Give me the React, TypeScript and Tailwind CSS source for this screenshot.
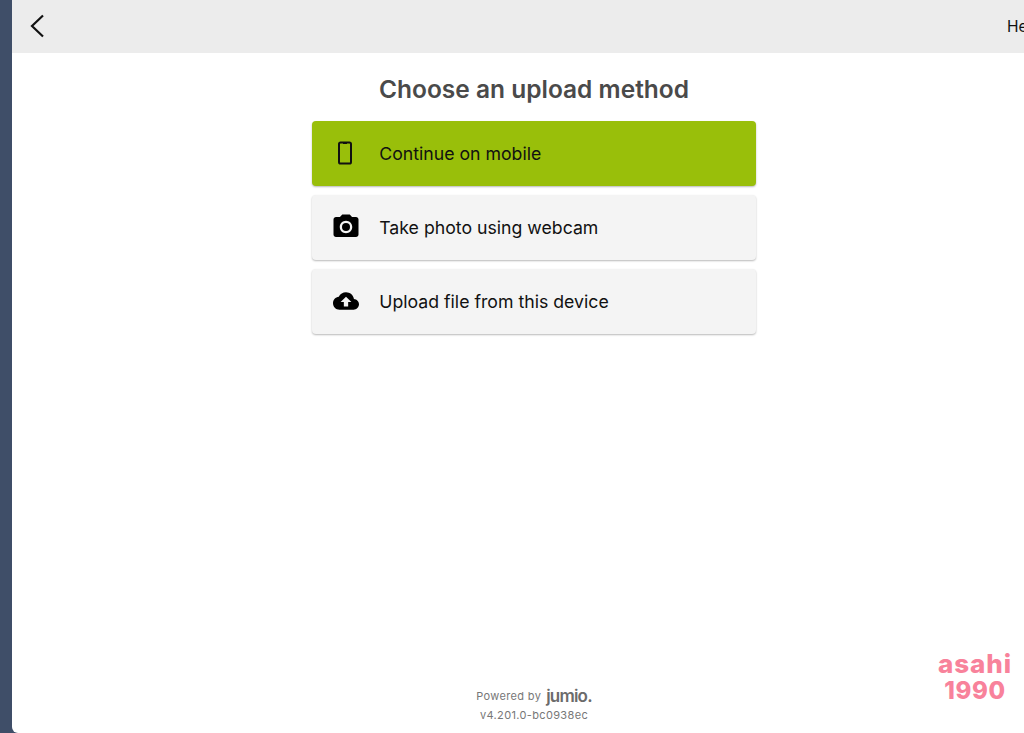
import React from "react";

function Phone() {
  return (
    <svg width="16" height="24" viewBox="0 0 16 24" fill="none" className="-ml-[1px] text-[#111]">
      <rect x="2" y="1.5" width="12" height="21" rx="1.6" stroke="currentColor" strokeWidth="2" />
      <path d="M6 2h4" stroke="currentColor" strokeWidth="2" />
    </svg>
  );
}

function Camera() {
  return (
    <svg width="30" height="30" viewBox="0 0 24 24" fill="#000">
      <circle cx="12" cy="12" r="3.2" />
      <path d="M9 2L7.17 4H4c-1.1 0-2 .9-2 2v12c0 1.1.9 2 2 2h16c1.1 0 2-.9 2-2V6c0-1.1-.9-2-2-2h-3.17L15 2H9zm3 15c-2.76 0-5-2.24-5-5s2.24-5 5-5 5 2.24 5 5-2.24 5-5 5z" />
    </svg>
  );
}

function Cloud() {
  return (
    <svg width="26" height="26" viewBox="0 0 24 24" fill="#000">
      <path d="M19.35 10.04C18.67 6.59 15.64 4 12 4 9.11 4 6.6 5.64 5.35 8.04 2.34 8.36 0 10.91 0 14c0 3.31 2.69 6 6 6h13c2.76 0 5-2.24 5-5 0-2.64-2.05-4.78-4.65-4.96zM14 13v4h-4v-4H7l5-5 5 5h-3z" />
    </svg>
  );
}

function Option({ icon, label, active }: { icon: React.ReactNode; label: string; active?: boolean }) {
  return (
    <div
      className={`flex h-[64.5px] items-center rounded-[4px] shadow-[0_1px_2px_rgba(0,0,0,0.28)] ${
        active ? "bg-[#99bf0a]" : "bg-[#f4f4f4]"
      }`}
    >
      <div className="flex w-[67px] shrink-0 justify-center">{icon}</div>
      <span className="pt-[2px] text-[17.7px] leading-none text-[#111]">{label}</span>
    </div>
  );
}

export default function App() {
  return (
    <div className="relative flex h-[733px] w-[1024px] overflow-hidden bg-[#3f4e68] font-['Inter',sans-serif]">
      <div className="w-3 shrink-0" />
      <main className="flex h-full w-[1044px] shrink-0 flex-col rounded-bl-[6px] bg-white">
        <header className="flex h-[53px] shrink-0 items-center justify-between bg-[#ececec] pb-[2px] pl-[17px]">
          <svg width="16" height="26" viewBox="0 0 16 26" fill="none">
            <path d="M14 2.5 L3 13 L14 23.5" stroke="#111" strokeWidth="2.2" />
          </svg>
          <span className="mt-[2px] w-[49px] text-[15.5px] text-[#111]">Help</span>
        </header>
        <h1 className="mt-[20px] text-center text-[24.5px] leading-[32px] font-semibold text-[#4a4a4a]">
          Choose an upload method
        </h1>
        <div className="mx-auto mt-[16px] flex w-[443.5px] flex-col gap-[9.5px]">
          <Option active icon={<Phone />} label="Continue on mobile" />
          <Option icon={<Camera />} label="Take photo using webcam" />
          <Option icon={<Cloud />} label="Upload file from this device" />
        </div>
        <footer className="mt-auto flex flex-col items-center pb-[10px] text-[#777]">
          <div className="flex items-center gap-[5px] text-[11px] leading-[20px] tracking-[0.35px]">
            <span>Powered by</span>
            <span className="text-[17px] leading-[20px] font-semibold tracking-[-0.8px] text-[#6b6b6b]">jumio.</span>
          </div>
          <div className="mt-[1px] text-[11px] leading-[16px] tracking-[0.35px]">v4.201.0-bc0938ec</div>
        </footer>
      </main>
      <div className="absolute left-[925px] top-[650px] flex w-[100px] flex-col items-center font-extrabold text-[#f8829b]">
        <span className="text-[26px] leading-[27px] tracking-[0.9px]">asahi</span>
        <span className="text-[24px] leading-[27px] tracking-[0.6px]">1990</span>
      </div>
    </div>
  );
}
